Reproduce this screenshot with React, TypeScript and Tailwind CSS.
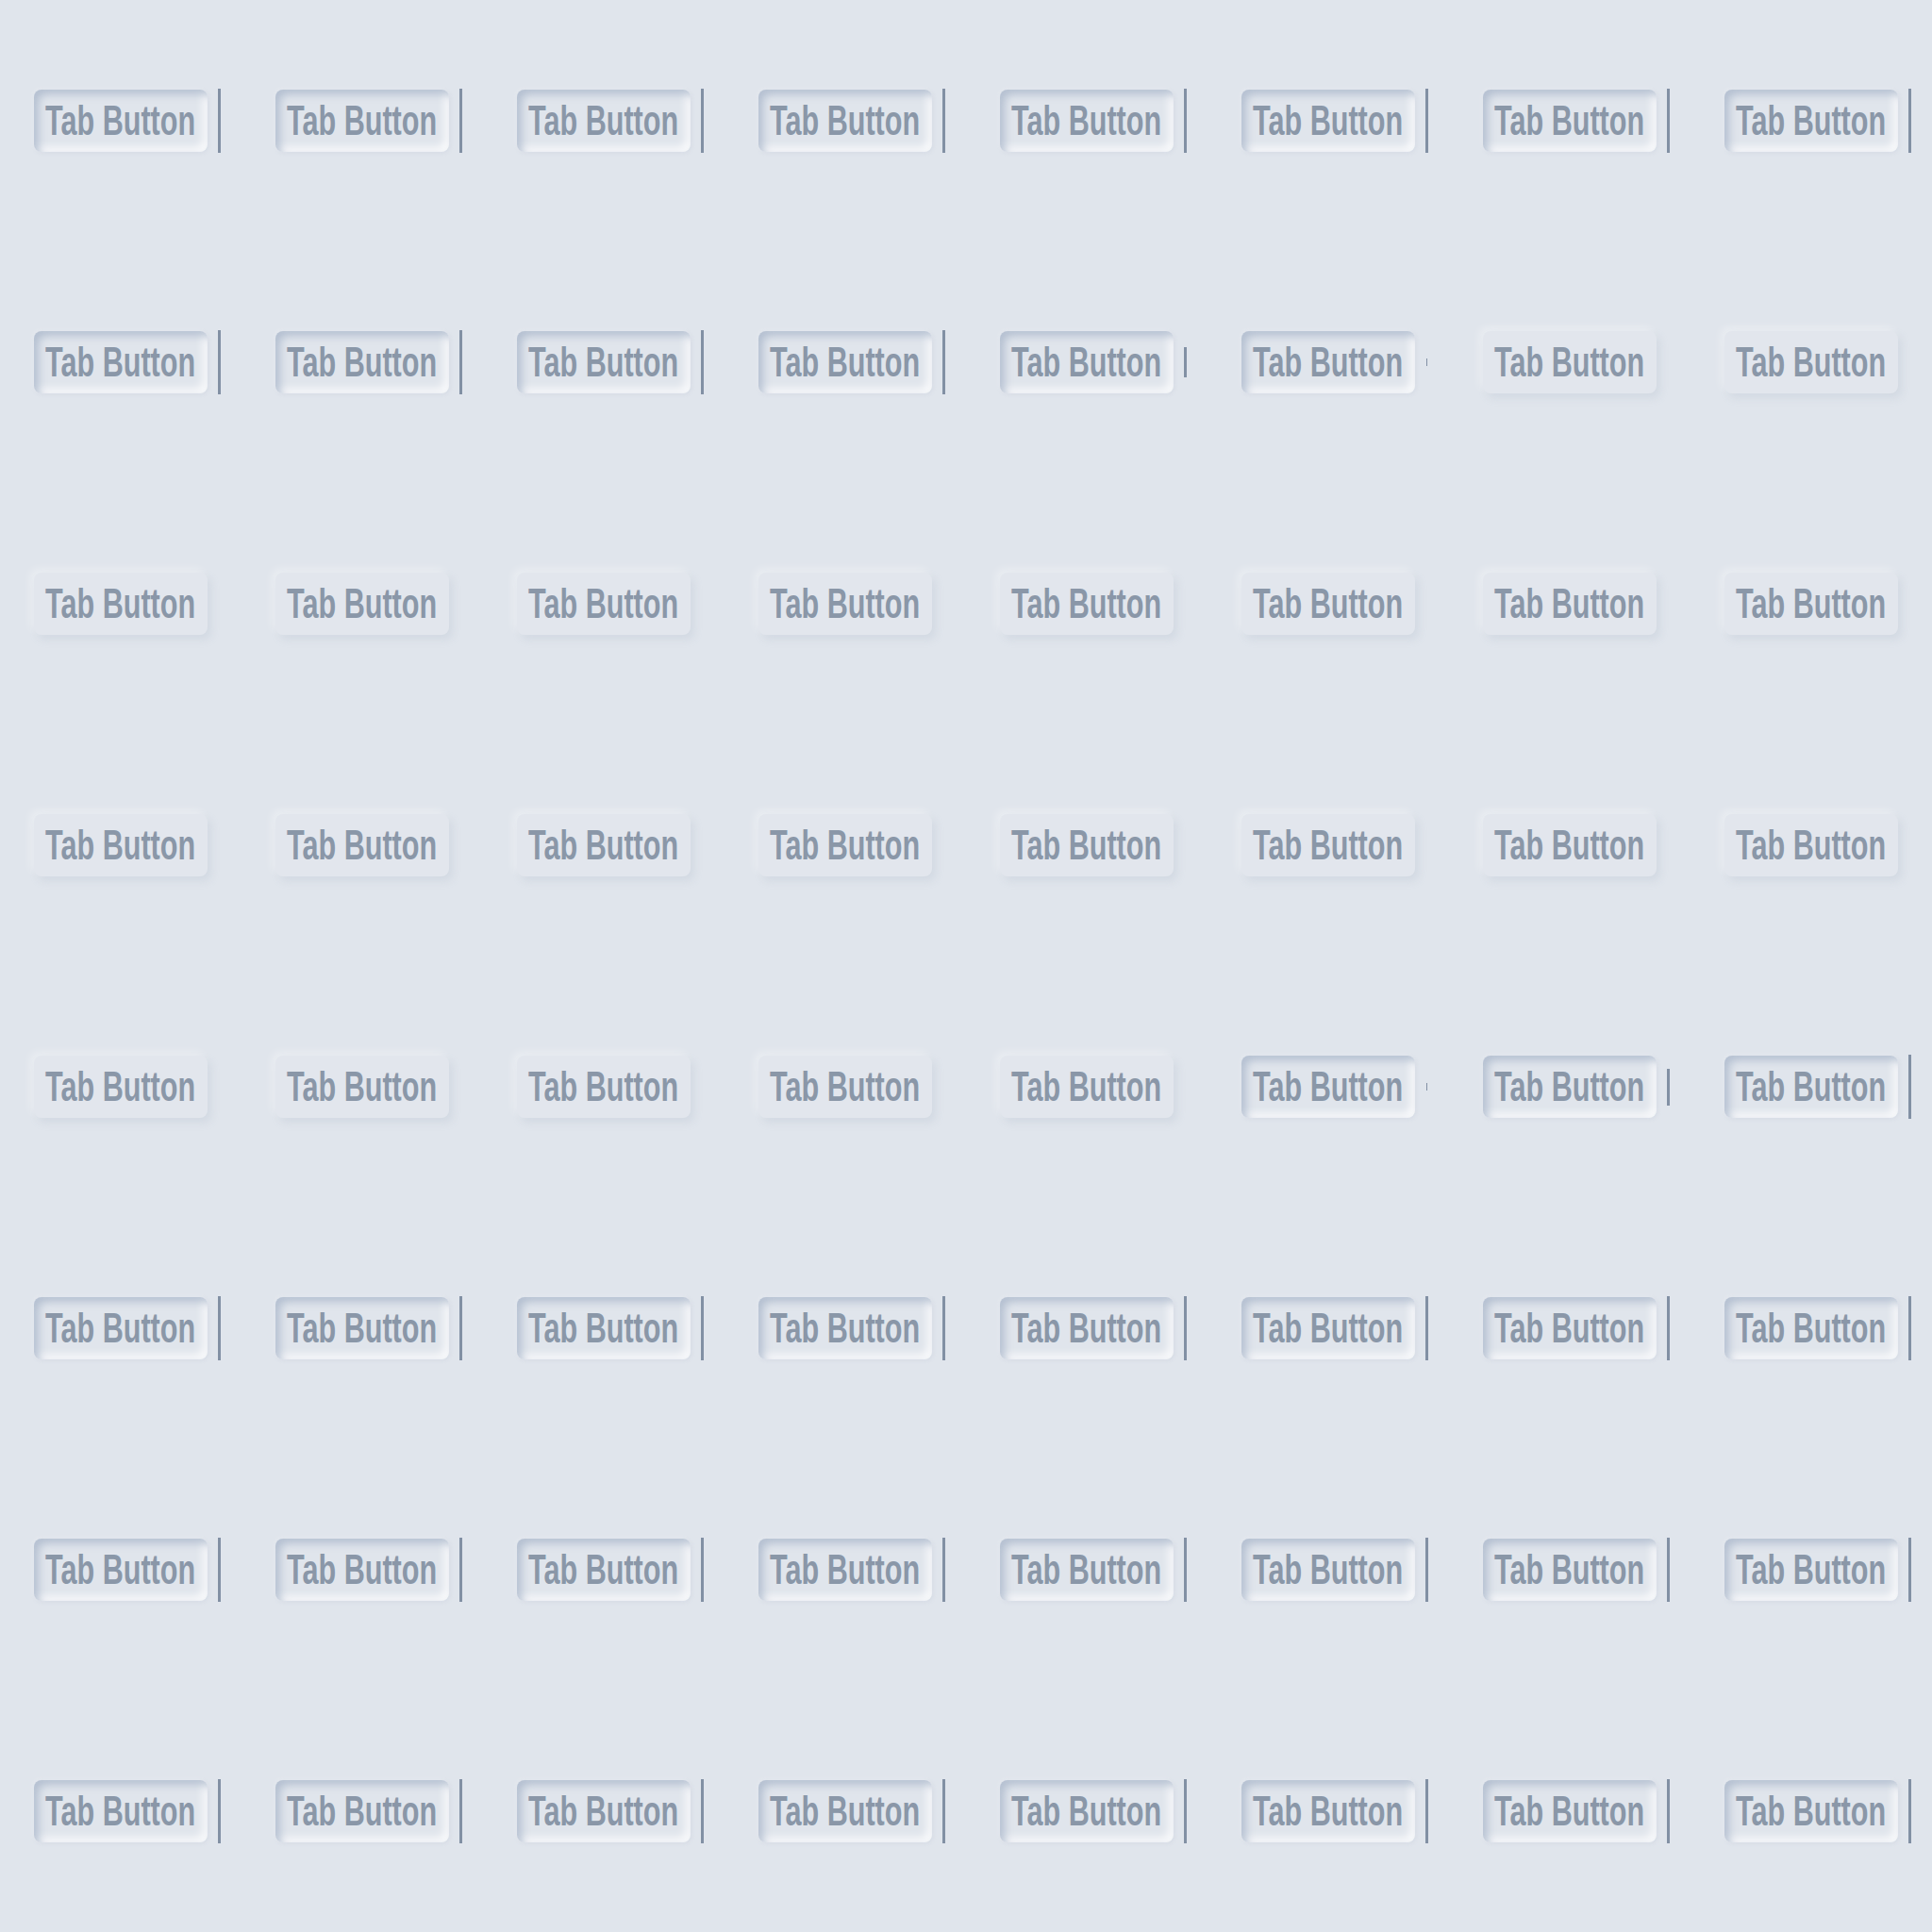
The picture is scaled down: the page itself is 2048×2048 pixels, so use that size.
const cells = Array.from({ length: 64 }, (_, i) => i);

// caret height per frame; null = no caret (button raised)
function cursorFor(i: number) {
  if (i === 12) return "h-[32px] w-[2.5px]";
  if (i === 13 || i === 37) return "h-[8px] w-[1.5px]";
  if (i === 38) return "h-[39px] w-[3px]";
  if (i >= 14 && i <= 36) return null;
  return "h-[68px] w-[3px]";
}

function TabCell({ i }: { i: number }) {
  const raised = i >= 14 && i <= 36;
  const cursor = cursorFor(i);
  return (
    <div className="flex h-[256px] w-[256px] items-center pl-[36px]">
      <button
        className={
          raised
            ? "flex h-[66px] w-[184px] shrink-0 items-center overflow-hidden rounded-[8px] bg-[#e2e6ed] pl-[12px] shadow-[4px_5px_9px_rgba(163,177,198,0.22),-4px_-4px_8px_rgba(255,255,255,0.35)]"
            : "flex h-[66px] w-[184px] shrink-0 items-center overflow-hidden rounded-[8px] bg-[#e0e5ec] pl-[12px] shadow-[inset_5px_5px_8px_rgba(163,177,198,0.7),inset_-5px_-5px_8px_rgba(255,255,255,0.8),1px_1px_4px_rgba(163,177,198,0.2),-1px_-1px_4px_rgba(255,255,255,0.3)]"
        }
      >
        <span className="inline-block origin-left -translate-y-[1px] scale-x-[0.68] whitespace-nowrap font-['Liberation_Sans',Arial,sans-serif] text-[45px] font-bold leading-none text-[#8a97a8]">
          Tab Button
        </span>
      </button>
      <div className="ml-[11px] flex h-[68px] w-[3px] shrink-0 items-center justify-center">
        {cursor && <div className={`${cursor} bg-[#8290a4]`} />}
      </div>
    </div>
  );
}

export default function App() {
  return (
    <div className="grid h-[2048px] w-[2048px] grid-cols-8 bg-[#e0e5ec]">
      {cells.map((i) => (
        <TabCell key={i} i={i} />
      ))}
    </div>
  );
}
